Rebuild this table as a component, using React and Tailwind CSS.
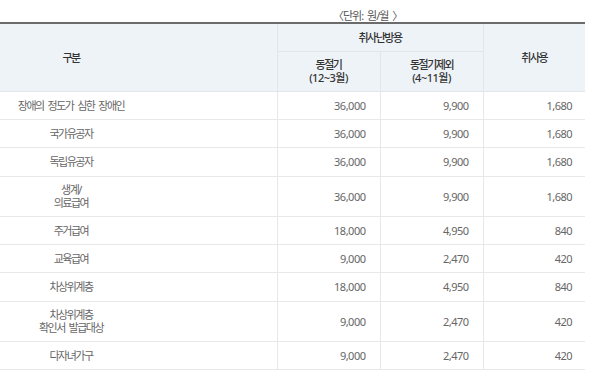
const rows = [
  { name: ['장애의 정도가 심한 장애인'], a: '36,000', b: '9,900', c: '1,680', h: 'h-[28px]' },
  { name: ['국가유공자'], a: '36,000', b: '9,900', c: '1,680', h: 'h-[28px]' },
  { name: ['독립유공자'], a: '36,000', b: '9,900', c: '1,680', h: 'h-[29px]' },
  { name: ['생계/', '의료급여'], a: '36,000', b: '9,900', c: '1,680', h: 'h-[40px]' },
  { name: ['주거급여'], a: '18,000', b: '4,950', c: '840', h: 'h-[28px]' },
  { name: ['교육급여'], a: '9,000', b: '2,470', c: '420', h: 'h-[28px]' },
  { name: ['차상위계층'], a: '18,000', b: '4,950', c: '840', h: 'h-[29px]' },
  { name: ['차상위계층', '확인서 발급대상'], a: '9,000', b: '2,470', c: '420', h: 'h-[40px]' },
  { name: ['다자녀가구'], a: '9,000', b: '2,470', c: '420', h: 'h-[28px]' },
];

export default function App() {
  return (
    <div
      className="w-[600px] h-[370px] bg-white overflow-hidden text-[11px] leading-[13px]"
      style={{ fontFamily: '"Noto Sans", "Noto Sans CJK KR", sans-serif' }}
    >
      <div className="h-[22px] pt-[9px] pl-[333px] text-[#555] tracking-[-1px] [word-spacing:2px] overflow-hidden">
        〈단위: 원/월 〉
      </div>
      <table className="w-[585px] table-fixed border-collapse border-t-2 border-[#6b6b6b]">
        <colgroup>
          <col className="w-[277px]" />
          <col className="w-[103px]" />
          <col className="w-[103px]" />
          <col className="w-[102px]" />
        </colgroup>
        <thead className="bg-[#eef3f8] text-[#333] tracking-[-1.5px]">
          <tr className="h-[28px]">
            <th rowSpan={2} className="font-medium p-0 text-left border-r border-b border-[#e0e6ec]">
              <div className="w-[142px] text-center">구분</div>
            </th>
            <th colSpan={2} className="font-medium p-0 border-r border-b border-[#e0e6ec]">
              취사난방용
            </th>
            <th rowSpan={2} className="font-medium p-0 border-b border-[#e0e6ec]">
              취사용
            </th>
          </tr>
          <tr className="h-[40px]">
            <th className="font-medium p-0 border-r border-b border-[#e0e6ec]">
              동절기
              <br />
              <span className="tracking-[-0.5px]">(12~3월)</span>
            </th>
            <th className="font-medium p-0 border-r border-b border-[#e0e6ec]">
              동절기제외
              <br />
              <span className="tracking-[-0.5px]">(4~11월)</span>
            </th>
          </tr>
        </thead>
        <tbody className="text-[#666]">
          {rows.map((r, i) => (
            <tr key={i} className={r.h}>
              <td className="p-0 border-r border-b border-[#e8e8e8] tracking-[-1.5px] [word-spacing:2.5px]">
                <div className="w-[142px] text-center">
                  {r.name.map((line, j) => (
                    <div key={j}>{line}</div>
                  ))}
                </div>
              </td>
              <td className="p-0 pr-[14px] text-right border-r border-b border-[#e8e8e8] tracking-[-0.5px]">
                {r.a}
              </td>
              <td className="p-0 pr-[14px] text-right border-r border-b border-[#e8e8e8] tracking-[-0.5px]">
                {r.b}
              </td>
              <td className="p-0 pr-[13px] text-right border-b border-[#e8e8e8] tracking-[-0.5px]">
                {r.c}
              </td>
            </tr>
          ))}
        </tbody>
      </table>
    </div>
  );
}
